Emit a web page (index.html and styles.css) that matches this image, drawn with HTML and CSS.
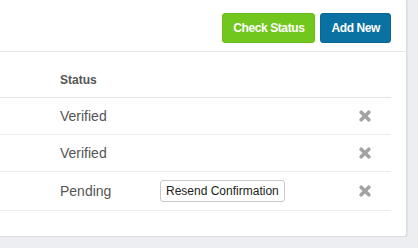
FILE: index.html
```html
<!DOCTYPE html>
<html lang="en">
  <head>
    <meta charset="UTF-8" />
    <title>Users</title>
    <link rel="stylesheet" href="styles.css">
  </head>
  <body>
    <div class="panel">
      <div class="panel-header">
        <button class="btn btn-sm btn-green">Check Status</button>
        <button class="btn btn-sm btn-blue">Add New</button>
      </div>
      <div class="panel-body">
        <table class="table">
          <colgroup>
            <col class="col-name" />
            <col class="col-status" />
            <col />
            <col class="col-remove" />
          </colgroup>
          <thead>
            <tr>
              <th></th>
              <th>Status</th>
              <th></th>
              <th></th>
            </tr>
          </thead>
          <tbody>
            <tr>
              <td></td>
              <td>Verified</td>
              <td></td>
              <td><svg class="icon-remove" viewBox="0 0 12 12"><path d="M2.2 2.2L9.8 9.8M9.8 2.2L2.2 9.8" /></svg></td>
            </tr>
            <tr>
              <td></td>
              <td>Verified</td>
              <td></td>
              <td><svg class="icon-remove" viewBox="0 0 12 12"><path d="M2.2 2.2L9.8 9.8M9.8 2.2L2.2 9.8" /></svg></td>
            </tr>
            <tr>
              <td></td>
              <td>Pending</td>
              <td><button class="btn btn-xs btn-default">Resend Confirmation</button></td>
              <td><svg class="icon-remove" viewBox="0 0 12 12"><path d="M2.2 2.2L9.8 9.8M9.8 2.2L2.2 9.8" /></svg></td>
            </tr>
          </tbody>
        </table>
      </div>
    </div>
  </body>
</html>
```

FILE: styles.css
```css
* {
  margin: 0;
  padding: 0;
  box-sizing: border-box;
}

body {
  background-color: #eceef1;
  font-family: "Liberation Sans", Arial, sans-serif;
  color: #555;
}

.panel {
  width: 407px;
  background-color: #fff;
  border-right: 1px solid #d9dbde;
  border-bottom: 1px solid #d9dbde;
  border-bottom-right-radius: 3px;
  box-shadow: 1px 1px 1px rgba(0, 0, 0, 0.04);
}

.panel-header {
  display: flex;
  justify-content: flex-end;
  gap: 5px;
  padding: 13px 15px 8px 0;
  border-bottom: 1px solid #e6e7e9;
}

.panel-body {
  padding: 12px 15px 25px 0;
}

.btn {
  font-family: "Liberation Sans", Arial, sans-serif;
  border: 1px solid transparent;
  border-radius: 3px;
  cursor: pointer;
}

.btn-sm {
  font-size: 12px;
  font-weight: bold;
  letter-spacing: -0.4px;
  line-height: 18px;
  padding: 5px 10px;
  color: #fff;
}

.btn-green {
  background-color: #71c71d;
  border-color: #69bd19;
}

.btn-blue {
  background-color: #0a71a3;
  border-color: #086594;
}

.btn-xs {
  font-size: 12px;
  line-height: 18px;
  padding: 1px 5px;
}

.btn-default {
  background-color: #fff;
  border-color: #c8c8c8;
  color: #222;
}

.table {
  width: 391px;
  table-layout: fixed;
  border-collapse: collapse;
}

.col-name {
  width: 52px;
}

.col-status {
  width: 100px;
}

.col-remove {
  width: 40px;
}

.table th {
  text-align: left;
  font-size: 12px;
  font-weight: bold;
  line-height: 17px;
  padding: 8px;
  border-bottom: 1px solid #e3e4e6;
}

.table td {
  font-size: 14px;
  line-height: 20px;
  padding: 8px;
  vertical-align: middle;
  border-bottom: 1px solid #eaebed;
}

.icon-remove {
  display: block;
  width: 12px;
  height: 12px;
  fill: none;
  stroke: #a3a3a3;
  stroke-width: 3.6;
  stroke-linecap: round;
}
```
